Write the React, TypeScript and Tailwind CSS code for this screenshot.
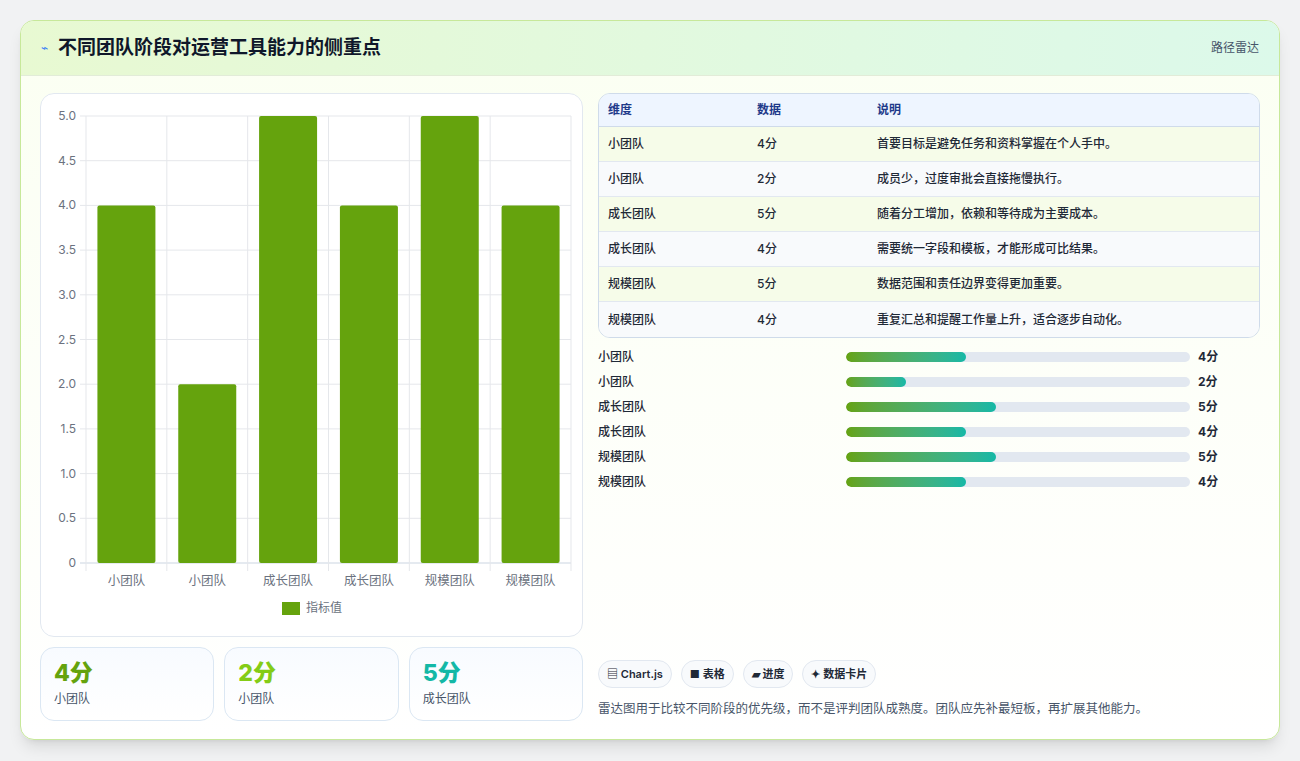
import React from "react";

const rows = [
  ["小团队", 4, "首要目标是避免任务和资料掌握在个人手中。"],
  ["小团队", 2, "成员少，过度审批会直接拖慢执行。"],
  ["成长团队", 5, "随着分工增加，依赖和等待成为主要成本。"],
  ["成长团队", 4, "需要统一字段和模板，才能形成可比结果。"],
  ["规模团队", 5, "数据范围和责任边界变得更加重要。"],
  ["规模团队", 4, "重复汇总和提醒工作量上升，适合逐步自动化。"],
] as const;

function Chart() {
  const x0 = 45, x1 = 530, y0 = 22, y1 = 469;
  const cw = (x1 - x0) / 6;
  const ticks = [0, 0.5, 1, 1.5, 2, 2.5, 3, 3.5, 4, 4.5, 5];
  return (
    <svg width="540" height="541" viewBox="0 0 540 541" className="block">
      {ticks.map((t) => {
        const y = y1 - (t / 5) * (y1 - y0);
        return (
          <g key={t}>
            <line x1={x0 - 6} x2={x1} y1={y} y2={y} stroke={t === 0 ? "#cbd5e1" : "#e5e7eb"} />
            <text x={x0 - 10} y={y + 4} textAnchor="end" fontSize="12" fill="#6b7280">{t === 0 ? "0" : t.toFixed(1)}</text>
          </g>
        );
      })}
      {Array.from({ length: 7 }).map((_, i) => (
        <line key={i} x1={x0 + i * cw} x2={x0 + i * cw} y1={y0} y2={y1 + 8} stroke="#e5e7eb" />
      ))}
      {rows.map((r, i) => {
        const h = (r[1] / 5) * (y1 - y0);
        const cx = x0 + i * cw + cw / 2;
        return (
          <g key={i}>
            <rect x={cx - 29} y={y1 - h} width="58" height={h} rx="2" fill="#65a30d" />
            <text x={cx} y={y1 + 22} textAnchor="middle" fontSize="12.5" fill="#6b7280">{r[0]}</text>
          </g>
        );
      })}
      <rect x="241" y="508" width="18" height="13" fill="#65a30d" />
      <text x="265" y="518" fontSize="12" fill="#6b7280">指标值</text>
    </svg>
  );
}

export default function App() {
  const font = { fontFamily: "Inter, 'Noto Sans CJK SC', sans-serif" };
  return (
    <div className="w-[1300px] h-[761px] bg-[#f1f2f3] pt-[20px] px-[20px]" style={font}>
      <div className="h-[720px] rounded-[14px] border border-[#c7e89a] bg-gradient-to-b from-[#fbfff2] to-white shadow-lg overflow-hidden flex flex-col">
        <div className="h-[55px] shrink-0 flex items-center justify-between px-[20px] bg-gradient-to-r from-[#e8f9d2] to-[#dcf9ea] border-b border-[#e2ecd8]">
          <div className="flex items-center gap-[10px]">
            <span className="text-[#3b82f6] text-[12px]">⌁</span>
            <span className="text-[19px] font-bold text-[#0f172a]">不同团队阶段对运营工具能力的侧重点</span>
          </div>
          <span className="text-[12px] text-[#475569]">路径雷达</span>
        </div>
        <div className="flex-1 flex gap-[15px] px-[19px] pt-[17px]">
          <div className="w-[543px] flex flex-col gap-[10px]">
            <div className="h-[544px] rounded-[14px] border border-[#e2e8f0] bg-white overflow-hidden">
              <Chart />
            </div>
            <div className="grid grid-cols-3 gap-[10px]">
              {[["4分", "#65a30d", "小团队"], ["2分", "#84cc16", "小团队"], ["5分", "#14b8a6", "成长团队"]].map(([v, c, l], i) => (
                <div key={i} className="h-[74px] rounded-[14px] border border-[#dbe7f3] bg-gradient-to-b from-[#f8fbff] to-white px-[13px] pt-[10px]">
                  <div className="text-[23px] font-extrabold leading-[30px]" style={{ color: c }}>{v}</div>
                  <div className="text-[12px] text-[#475569] mt-[2px]">{l}</div>
                </div>
              ))}
            </div>
          </div>
          <div className="flex-1 flex flex-col">
            <div className="rounded-[12px] border border-[#cfdbea] overflow-hidden text-[12px]">
              <div className="flex h-[33px] items-center bg-[#eef5ff] text-[#1e3a8a] font-semibold border-b border-[#cfdbea]">
                <div className="w-[158px] pl-[9px]">维度</div>
                <div className="w-[120px]">数据</div>
                <div>说明</div>
              </div>
              {rows.map((r, i) => (
                <div key={i} className={`flex h-[35px] items-center text-[#1f2937] font-medium ${i % 2 === 0 ? "bg-[#f6fce9]" : "bg-[#f8fafc]"} ${i < 5 ? "border-b border-[#e2e8f0]" : ""}`}>
                  <div className="w-[158px] pl-[9px]">{r[0]}</div>
                  <div className="w-[120px]">{r[1]}分</div>
                  <div>{r[2]}</div>
                </div>
              ))}
            </div>
            <div className="flex flex-col gap-[7px] mt-[10px]">
              {rows.map((r, i) => (
                <div key={i} className="flex items-center h-[18px] text-[12px] font-medium text-[#1f2937]">
                  <div className="w-[248px]">{r[0]}</div>
                  <div className="w-[344px] h-[10px] rounded-full bg-[#e2e8f0] overflow-hidden">
                    <div className="h-full rounded-full bg-gradient-to-r from-[#65a30d] to-[#14b8a6]" style={{ width: `${(r[1] * 30 / 344) * 100}%` }} />
                  </div>
                  <div className="ml-[8px] font-bold">{r[1]}分</div>
                </div>
              ))}
            </div>
            <div className="flex-1" />
            <div className="flex gap-[9px]">
              {["▤ Chart.js", "■ 表格", "▰ 进度", "✦ 数据卡片"].map((t) => (
                <span key={t} className="h-[28px] flex items-center px-[8px] rounded-full border border-[#e2e8f0] bg-[#f8fafc] text-[11px] font-semibold text-[#1f2937]">{t}</span>
              ))}
            </div>
            <div className="text-[12.5px] text-[#475569] mt-[12px] mb-[20px]">雷达图用于比较不同阶段的优先级，而不是评判团队成熟度。团队应先补最短板，再扩展其他能力。</div>
          </div>
        </div>
      </div>
    </div>
  );
}
